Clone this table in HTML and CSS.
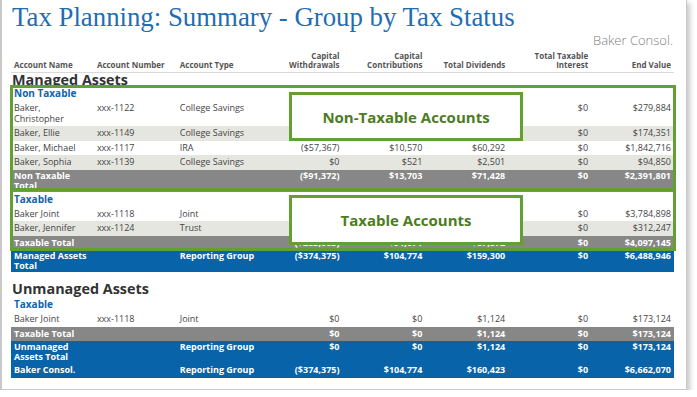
FILE: index.html
```
<!DOCTYPE html>
<html lang="en">
<head>
<meta charset="utf-8">
<title>Tax Planning: Summary - Group by Tax Status</title>
<link rel="stylesheet" href="styles.css">
</head>
<body>
<div class="frame">
  <h1 class="title">Tax Planning: Summary - Group by Tax Status</h1>
  <div class="entity">Baker Consol.</div>
  <div class="sheet">
    <table class="report">
      <thead>
        <tr>
          <th>Account Name</th>
          <th>Account Number</th>
          <th>Account Type</th>
          <th class="num">Capital<br>Withdrawals</th>
          <th class="num">Capital<br>Contributions</th>
          <th class="num">Total Dividends</th>
          <th class="num">Total Taxable<br>Interest</th>
          <th class="num">End Value</th>
        </tr>
      </thead>
      <tbody>
        <tr class="group"><td colspan="8">Managed Assets</td></tr>
        <tr class="sub"><td colspan="8">Non Taxable</td></tr>
        <tr class="row">
          <td>Baker, Christopher</td><td>xxx-1122</td><td>College Savings</td>
          <td class="num"></td><td class="num"></td><td class="num"></td><td class="num">$0</td><td class="num">$279,884</td>
        </tr>
        <tr class="row alt">
          <td>Baker, Ellie</td><td>xxx-1149</td><td>College Savings</td>
          <td class="num"></td><td class="num"></td><td class="num"></td><td class="num">$0</td><td class="num">$174,351</td>
        </tr>
        <tr class="row">
          <td>Baker, Michael</td><td>xxx-1117</td><td>IRA</td>
          <td class="num">($57,367)</td><td class="num">$10,570</td><td class="num">$60,292</td><td class="num">$0</td><td class="num">$1,842,716</td>
        </tr>
        <tr class="row alt">
          <td>Baker, Sophia</td><td>xxx-1139</td><td>College Savings</td>
          <td class="num">$0</td><td class="num">$521</td><td class="num">$2,501</td><td class="num">$0</td><td class="num">$94,850</td>
        </tr>
        <tr class="total two">
          <td>Non Taxable Total</td><td></td><td></td>
          <td class="num">($91,372)</td><td class="num">$13,703</td><td class="num">$71,428</td><td class="num">$0</td><td class="num">$2,391,801</td>
        </tr>
        <tr class="sub"><td colspan="8">Taxable</td></tr>
        <tr class="row">
          <td>Baker Joint</td><td>xxx-1118</td><td>Joint</td>
          <td class="num"></td><td class="num"></td><td class="num"></td><td class="num">$0</td><td class="num">$3,784,898</td>
        </tr>
        <tr class="row alt">
          <td>Baker, Jennifer</td><td>xxx-1124</td><td>Trust</td>
          <td class="num"></td><td class="num"></td><td class="num"></td><td class="num">$0</td><td class="num">$312,247</td>
        </tr>
        <tr class="total">
          <td>Taxable Total</td><td></td><td></td>
          <td class="num">($283,003)</td><td class="num">$91,071</td><td class="num">$87,872</td><td class="num">$0</td><td class="num">$4,097,145</td>
        </tr>
        <tr class="grand two">
          <td>Managed Assets Total</td><td></td><td>Reporting Group</td>
          <td class="num">($374,375)</td><td class="num">$104,774</td><td class="num">$159,300</td><td class="num">$0</td><td class="num">$6,488,946</td>
        </tr>
        <tr class="group gap"><td colspan="8">Unmanaged Assets</td></tr>
        <tr class="sub"><td colspan="8">Taxable</td></tr>
        <tr class="row">
          <td>Baker Joint</td><td>xxx-1118</td><td>Joint</td>
          <td class="num">$0</td><td class="num">$0</td><td class="num">$1,124</td><td class="num">$0</td><td class="num">$173,124</td>
        </tr>
        <tr class="total">
          <td>Taxable Total</td><td></td><td></td>
          <td class="num">$0</td><td class="num">$0</td><td class="num">$1,124</td><td class="num">$0</td><td class="num">$173,124</td>
        </tr>
        <tr class="grand two">
          <td>Unmanaged Assets Total</td><td></td><td>Reporting Group</td>
          <td class="num">$0</td><td class="num">$0</td><td class="num">$1,124</td><td class="num">$0</td><td class="num">$173,124</td>
        </tr>
        <tr class="grand">
          <td>Baker Consol.</td><td></td><td>Reporting Group</td>
          <td class="num">($374,375)</td><td class="num">$104,774</td><td class="num">$160,423</td><td class="num">$0</td><td class="num">$6,662,070</td>
        </tr>
      </tbody>
    </table>
    <div class="outline outline-nt"></div>
    <div class="outline outline-t"></div>
    <div class="callout callout-nt">Non-Taxable Accounts</div>
    <div class="callout callout-t">Taxable Accounts</div>
  </div>
</div>
</body>
</html>
```
FILE: styles.css
```
html, body {
  margin: 0;
  padding: 0;
  background: #ffffff;
}

body {
  font-family: "Open Sans", "Liberation Sans", sans-serif;
}

.frame {
  width: 663px;
  padding: 2px 12px 11px 9px;
  border-left: 2px solid #c9c9c9;
  border-right: 1px solid #c9c9c9;
  border-bottom: 1px solid #c9c9c9;
  box-shadow: 3px 3px 5px rgba(0, 0, 0, 0.22);
  background: #ffffff;
}

.title {
  margin: 0 0 0 1px;
  font-family: "Liberation Serif", "Times New Roman", serif;
  font-weight: normal;
  font-size: 26.8px;
  line-height: 30px;
  color: #1f6db3;
}

.entity {
  text-align: right;
  font-size: 13px;
  font-weight: 300;
  line-height: 16px;
  color: #808080;
  padding-right: 1px;
}

.sheet {
  position: relative;
}

.report {
  width: 663px;
  border-collapse: collapse;
  table-layout: fixed;
}

.report th {
  font-size: 8px;
  font-weight: bold;
  line-height: 9px;
  color: #555555;
  text-align: left;
  vertical-align: bottom;
  padding: 3px 3px 3px;
  border-bottom: 1px solid #d9d9d9;
  white-space: nowrap;
}

.report td {
  font-size: 9px;
  line-height: 10.5px;
  padding: 2px 3px;
  color: #454545;
  vertical-align: top;
}

.report .num {
  text-align: right;
}

.report .group td {
  font-size: 14.4px;
  font-weight: bold;
  line-height: 13px;
  color: #333333;
  padding: 0 1px;
}

.report .group.gap td {
  padding-top: 9px;
  line-height: 16px;
}

.report .sub td {
  font-size: 10px;
  font-weight: bold;
  line-height: 11px;
  color: #1064ae;
  padding: 2px 3px;
}

.report .row td {
  background: #ffffff;
}

.report .row.alt td {
  background: #e6e6e1;
}

.report .total td {
  background: #878787;
  color: #ffffff;
  font-weight: bold;
}

.report .grand td {
  background: #0863a8;
  color: #ffffff;
  font-weight: bold;
}

.report .two td {
  line-height: 10px;
  padding-top: 1px;
  padding-bottom: 1px;
}

.outline {
  position: absolute;
  box-sizing: border-box;
  border: 3px solid #62a032;
  left: -1px;
  width: 666px;
}

.outline-nt {
  top: 37px;
  height: 106px;
}

.outline-t {
  top: 140px;
  height: 63px;
}

.callout {
  position: absolute;
  box-sizing: border-box;
  left: 278px;
  width: 234px;
  border: 3px solid #62a032;
  background: #ffffff;
  display: flex;
  align-items: center;
  justify-content: center;
  font-size: 15px;
  font-weight: bold;
  color: #4c7c22;
}

.callout-nt {
  top: 44px;
  height: 49px;
}

.callout-t {
  top: 147px;
  height: 50px;
}
```
